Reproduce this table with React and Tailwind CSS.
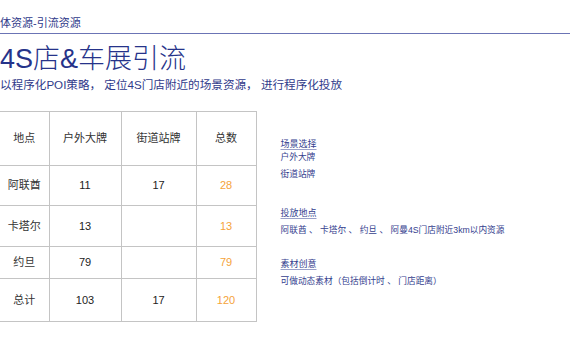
const rows = [
  { place: '阿联酋', outdoor: '11', street: '17', total: '28', h: 'h-[40px]' },
  { place: '卡塔尔', outdoor: '13', street: '', total: '13', h: 'h-[41px]' },
  { place: '约旦', outdoor: '79', street: '', total: '79', h: 'h-[32px]' },
  { place: '总计', outdoor: '103', street: '17', total: '120', h: 'h-[43px]' },
];

const font = { fontFamily: '"Liberation Sans", "Noto Sans CJK SC", sans-serif' };

function Heading({ children, className = '' }) {
  return (
    <span className={`text-[9px] leading-[13px] text-[#34408e] underline underline-offset-2 decoration-[#9aa0c8] ${className}`}>
      {children}
    </span>
  );
}

function Line({ children, className = '' }) {
  return <span className={`text-[8.7px] leading-[13px] text-[#34408e] ${className}`}>{children}</span>;
}

export default function App() {
  return (
    <div className="w-[570px] h-[360px] bg-white overflow-hidden" style={font}>
      {/* Header */}
      <div className="h-[34px] pt-[10px] border-b border-[#6b74b5]">
        <span className="text-[11px] leading-[14px] text-[#2f3a8a]">体资源-引流资源</span>
      </div>

      <div className="mt-[9px]">
        <h1 className="text-[27px] leading-[32px] font-light text-[#26338a]">4S店&amp;车展引流</h1>
        <p className="text-[11.6px] leading-[16px] text-[#2f3a8a] mt-[2px]">以程序化POI策略， 定位4S门店附近的场景资源， 进行程序化投放</p>
      </div>

      <div className="flex mt-[18px]">
        {/* Table */}
        <table className="table-fixed border-collapse w-[256px] text-[11px] text-[#333]">
          <colgroup>
            <col className="w-[49px]" />
            <col className="w-[72px]" />
            <col className="w-[75px]" />
            <col className="w-[60px]" />
          </colgroup>
          <thead>
            <tr className="h-[54px]">
              <th className="font-normal border-t border-b border-r border-[#c4c4c4]">地点</th>
              <th className="font-normal border border-[#c4c4c4]">户外大牌</th>
              <th className="font-normal border border-[#c4c4c4]">街道站牌</th>
              <th className="font-normal border border-[#c4c4c4]">总数</th>
            </tr>
          </thead>
          <tbody>
            {rows.map((r) => (
              <tr key={r.place} className={r.h}>
                <td className="text-center border-b border-r border-[#c4c4c4]">{r.place}</td>
                <td className="text-center border border-[#c4c4c4] text-[#222]">{r.outdoor}</td>
                <td className="text-center border border-[#c4c4c4] text-[#222]">{r.street}</td>
                <td className="text-center border border-[#c4c4c4] text-[#f5a33a]">{r.total}</td>
              </tr>
            ))}
          </tbody>
        </table>

        {/* Notes */}
        <div className="ml-[24px] pt-[27px] flex flex-col items-start">
          <Heading>场景选择</Heading>
          <Line>户外大牌</Line>
          <Line className="mt-[4px]">街道站牌</Line>

          <Heading className="mt-[26px]">投放地点</Heading>
          <Line className="mt-[4px]">阿联酋 、 卡塔尔 、 约旦 、 阿曼4S门店附近3km以内资源</Line>

          <Heading className="mt-[21px]">素材创意</Heading>
          <Line className="mt-[4px]">可做动态素材（包括倒计时 、 门店距离）</Line>
        </div>
      </div>
    </div>
  );
}
